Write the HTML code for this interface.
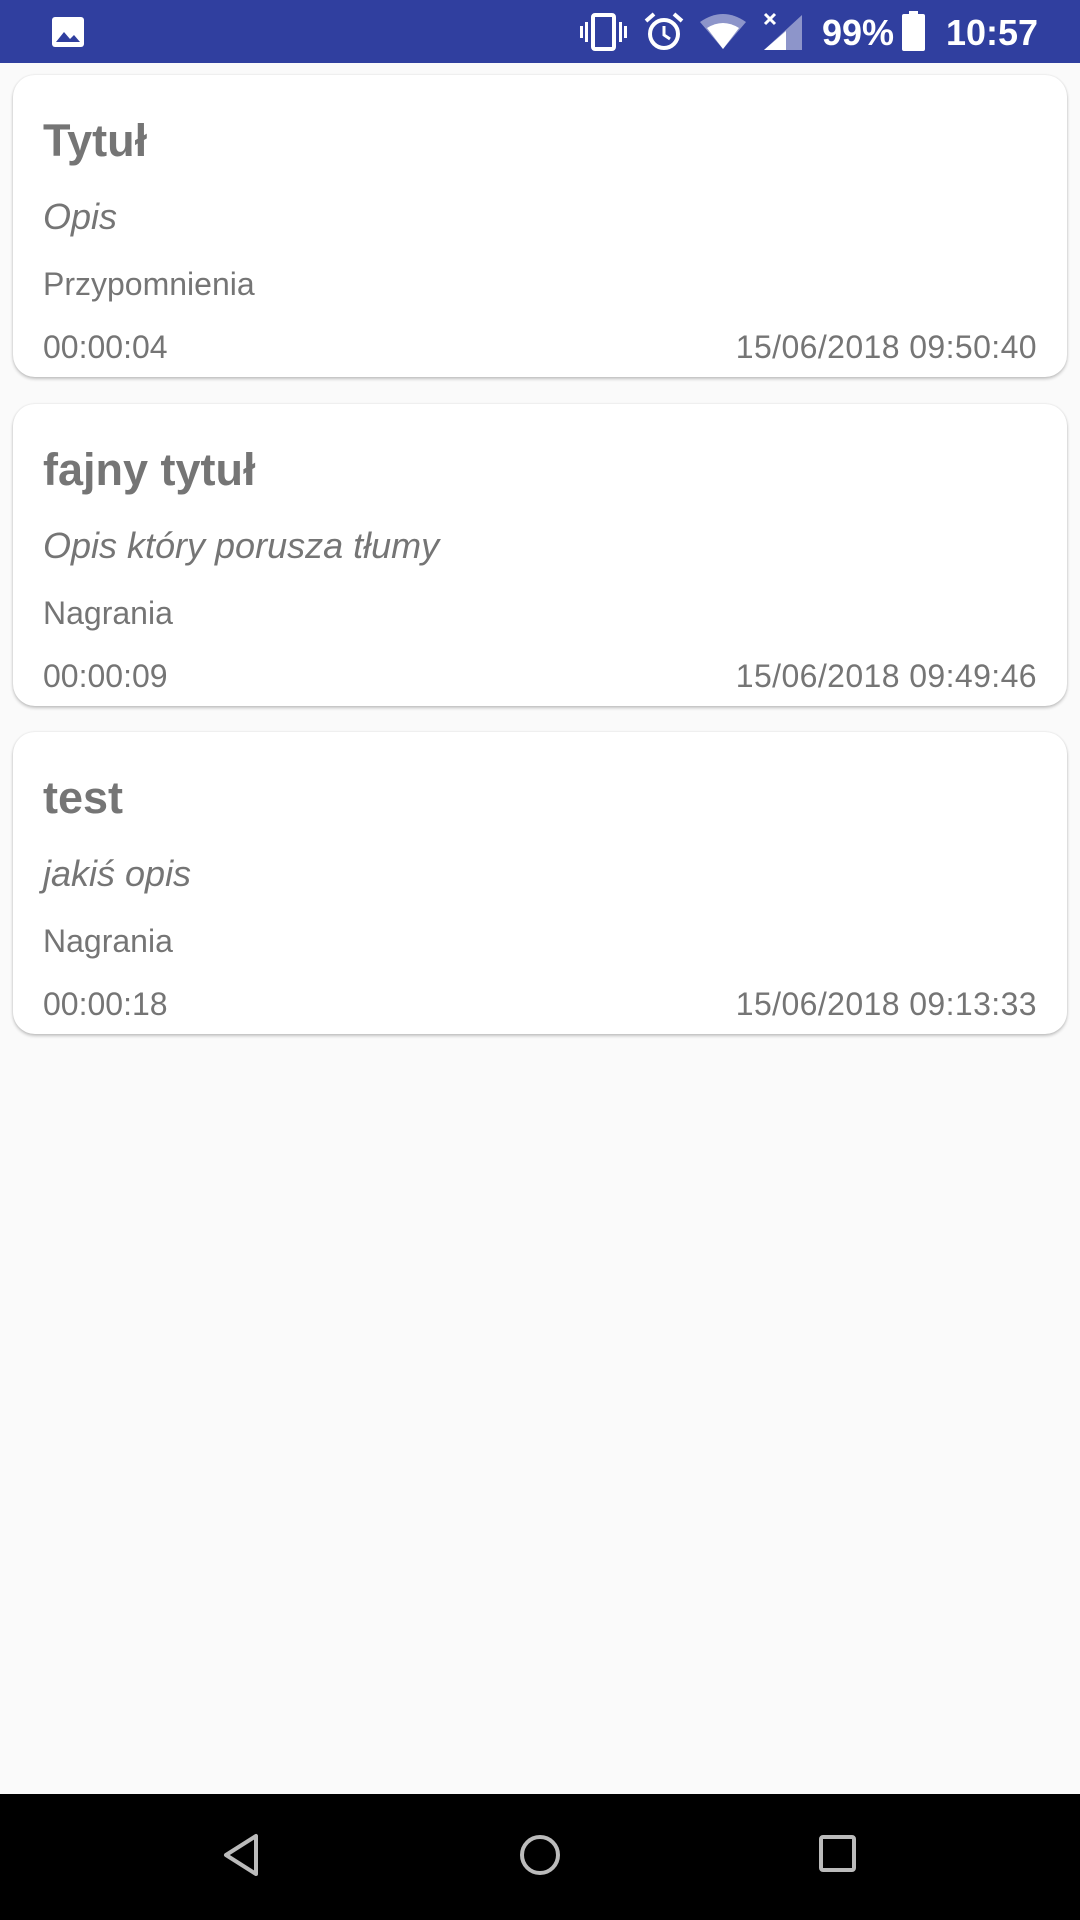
<!DOCTYPE html>
<html><head><meta charset="utf-8"><style>
*{margin:0;padding:0;box-sizing:border-box}
body{width:1080px;height:1920px;background:#fafafa;position:relative;overflow:hidden;font-family:"Liberation Sans",sans-serif;color:#757575}
.sb{position:absolute;left:0;top:0;width:1080px;height:63px;background:#303f9f}
.nav{position:absolute;left:0;top:1794px;width:1080px;height:126px;background:#000}
.card{position:absolute;left:13px;width:1054px;height:302px;background:#fff;border-radius:22px;box-shadow:0 2px 3px rgba(0,0,0,.22),0 0 2px rgba(0,0,0,.1)}
.t{position:absolute;left:30px;font-size:45px;font-weight:bold;top:41px;line-height:50px}
.o{position:absolute;left:30px;font-size:36px;font-style:italic;top:122px;line-height:40px}
.c{position:absolute;left:30px;font-size:32px;top:191px;line-height:36px}
.d{position:absolute;left:30px;font-size:32px;top:254px;line-height:36px}
.r{position:absolute;right:30px;font-size:32px;top:254px;line-height:36px;letter-spacing:.4px}
.st{position:absolute;color:#fff;font-weight:bold;font-size:36px;top:13px;line-height:40px}
</style></head><body>
<div class="sb">
<svg style="position:absolute;left:50px;top:15px" width="36" height="34" viewBox="0 0 36 34"><rect x="2" y="2" width="32" height="30" rx="3" fill="#fff"/><path d="M6 27 L14 17 L20 24 L24 20 L30 27Z" fill="#303f9f"/></svg>
<svg style="position:absolute;left:580px;top:12px" width="48" height="40" viewBox="0 0 48 40"><rect x="13" y="3" width="21" height="34" rx="2" fill="none" stroke="#fff" stroke-width="4"/><rect x="5" y="10" width="3" height="20" fill="#fff"/><rect x="0" y="14" width="3" height="12" fill="#fff"/><rect x="39" y="10" width="3" height="20" fill="#fff"/><rect x="44" y="14" width="3" height="12" fill="#fff"/></svg>
<svg style="position:absolute;left:644px;top:11px" width="40" height="42" viewBox="0 0 40 42"><circle cx="20" cy="23" r="14" fill="none" stroke="#fff" stroke-width="4"/><path d="M20 15V24L26 28" stroke="#fff" stroke-width="3" fill="none"/><path d="M2 10L10 3M38 10L30 3" stroke="#fff" stroke-width="4"/></svg>
<svg style="position:absolute;left:700px;top:14px" width="46" height="36" viewBox="0 0 46 36"><path d="M0 8Q23 -8 46 8L23 35Z" fill="#fff" opacity=".45"/><path d="M7 14Q23 4 39 14L23 35Z" fill="#fff"/></svg>
<svg style="position:absolute;left:762px;top:12px" width="40" height="40" viewBox="0 0 40 40"><path d="M40 3V38H2Z" fill="#fff" opacity=".45"/><path d="M24 19V38H2Z" fill="#fff"/><path d="M3 2L13 12M13 2L3 12" stroke="#fff" stroke-width="3"/></svg>
<div class="st" style="left:822px">99%</div>
<svg style="position:absolute;left:902px;top:11px" width="23" height="40" viewBox="0 0 23 40"><rect x="7" y="0" width="9" height="4" fill="#fff"/><rect x="0" y="3" width="23" height="37" rx="2" fill="#fff"/></svg>
<div class="st" style="left:946px">10:57</div>
</div>
<div class="card" style="top:75px"><div class="t">Tytuł</div><div class="o">Opis</div><div class="c">Przypomnienia</div><div class="d">00:00:04</div><div class="r">15/06/2018 09:50:40</div></div>
<div class="card" style="top:404px"><div class="t">fajny tytuł</div><div class="o">Opis który porusza tłumy</div><div class="c">Nagrania</div><div class="d">00:00:09</div><div class="r">15/06/2018 09:49:46</div></div>
<div class="card" style="top:732px"><div class="t">test</div><div class="o">jakiś opis</div><div class="c">Nagrania</div><div class="d">00:00:18</div><div class="r">15/06/2018 09:13:33</div></div>
<div class="nav">
<svg style="position:absolute;left:222px;top:38px" width="40" height="46" viewBox="0 0 40 46"><path d="M34 4V42L4 23Z" fill="none" stroke="#bbb" stroke-width="4" stroke-linejoin="round"/></svg>
<svg style="position:absolute;left:518px;top:39px" width="44" height="44" viewBox="0 0 44 44"><circle cx="22" cy="22" r="18" fill="none" stroke="#bbb" stroke-width="4"/></svg>
<svg style="position:absolute;left:818px;top:40px" width="40" height="40" viewBox="0 0 40 40"><rect x="3" y="3" width="33" height="33" rx="2" fill="none" stroke="#bbb" stroke-width="4"/></svg>
</div>
</body></html>
